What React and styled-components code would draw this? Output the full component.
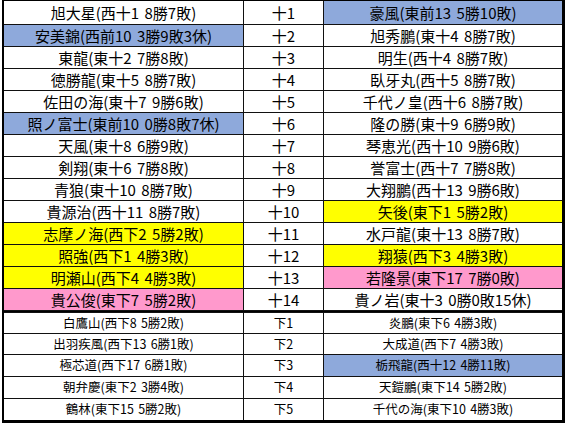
import React from "react";
import styled, { createGlobalStyle } from "styled-components";

const Global = createGlobalStyle`
  html, body { margin: 0; padding: 0; background: #fff; }
  body { font-family: "Noto Sans CJK JP", "Noto Sans", sans-serif; }
`;

const Page = styled.div`
  width: 567px;
  height: 424px;
  padding-left: 2px;
  box-sizing: border-box;
  overflow: hidden;
  background: #fff;
`;

const Sheet = styled.div`
  display: grid;
  grid-template-columns: 239px 79px 238px;
  grid-template-rows: 23px repeat(13, 21px) 1px 20px 20px 21px 21px 21px;
  gap: 1px;
  width: max-content;
  background: #111;
  border-style: solid;
  border-color: #000;
  border-width: 1px 3px 3px 2px;
`;

const colors = {
  blue: "#8ea9db",
  yellow: "#ffff00",
  pink: "#ff99cc",
};

const Cell = styled.div`
  display: flex;
  align-items: center;
  justify-content: center;
  background: ${(p) => (p.$tone ? colors[p.$tone] : "#fff")};
  font-size: ${(p) => (p.$small ? "12.5px" : "15px")};
  word-spacing: ${(p) => (p.$small ? "1.5px" : "2px")};
  line-height: 1;
  color: #000;
  white-space: nowrap;
  overflow: hidden;
`;

const Divider = styled.div`
  grid-column: 1 / -1;
  background: #000;
`;

const upper = [
  ["旭大星(西十1 8勝7敗)", null, "十1", "豪風(東前13 5勝10敗)", "blue"],
  ["安美錦(西前10 3勝9敗3休)", "blue", "十2", "旭秀鵬(東十4 8勝7敗)", null],
  ["東龍(東十2 7勝8敗)", null, "十3", "明生(西十4 8勝7敗)", null],
  ["徳勝龍(東十5 8勝7敗)", null, "十4", "臥牙丸(西十5 8勝7敗)", null],
  ["佐田の海(東十7 9勝6敗)", null, "十5", "千代ノ皇(西十6 8勝7敗)", null],
  ["照ノ富士(東前10 0勝8敗7休)", "blue", "十6", "隆の勝(東十9 6勝9敗)", null],
  ["天風(東十8 6勝9敗)", null, "十7", "琴恵光(西十10 9勝6敗)", null],
  ["剣翔(東十6 7勝8敗)", null, "十8", "誉富士(西十7 7勝8敗)", null],
  ["青狼(東十10 8勝7敗)", null, "十9", "大翔鵬(西十13 9勝6敗)", null],
  ["貴源治(西十11 8勝7敗)", null, "十10", "矢後(東下1 5勝2敗)", "yellow"],
  ["志摩ノ海(西下2 5勝2敗)", "yellow", "十11", "水戸龍(東十13 8勝7敗)", null],
  ["照強(西下1 4勝3敗)", "yellow", "十12", "翔猿(西下3 4勝3敗)", "yellow"],
  ["明瀬山(西下4 4勝3敗)", "yellow", "十13", "若隆景(東下17 7勝0敗)", "pink"],
  ["貴公俊(東下7 5勝2敗)", "pink", "十14", "貴ノ岩(東十3 0勝0敗15休)", null],
];

const lower = [
  ["白鷹山(西下8 5勝2敗)", null, "下1", "炎鵬(東下6 4勝3敗)", null],
  ["出羽疾風(西下13 6勝1敗)", null, "下2", "大成道(西下7 4勝3敗)", null],
  ["極芯道(西下17 6勝1敗)", null, "下3", "栃飛龍(西十12 4勝11敗)", "blue"],
  ["朝弁慶(東下2 3勝4敗)", null, "下4", "天鎧鵬(東下14 5勝2敗)", null],
  ["鶴林(東下15 5勝2敗)", null, "下5", "千代の海(東下10 4勝3敗)", null],
];

function Rows({ data, small }) {
  return data.map(([left, leftTone, mid, right, rightTone]) => (
    <React.Fragment key={mid}>
      <Cell $tone={leftTone} $small={small}>{left}</Cell>
      <Cell $small={small}>{mid}</Cell>
      <Cell $tone={rightTone} $small={small}>{right}</Cell>
    </React.Fragment>
  ));
}

export default function App() {
  return (
    <>
      <Global />
      <Page>
        <Sheet>
          <Rows data={upper} />
          <Divider />
          <Rows data={lower} small />
        </Sheet>
      </Page>
    </>
  );
}
